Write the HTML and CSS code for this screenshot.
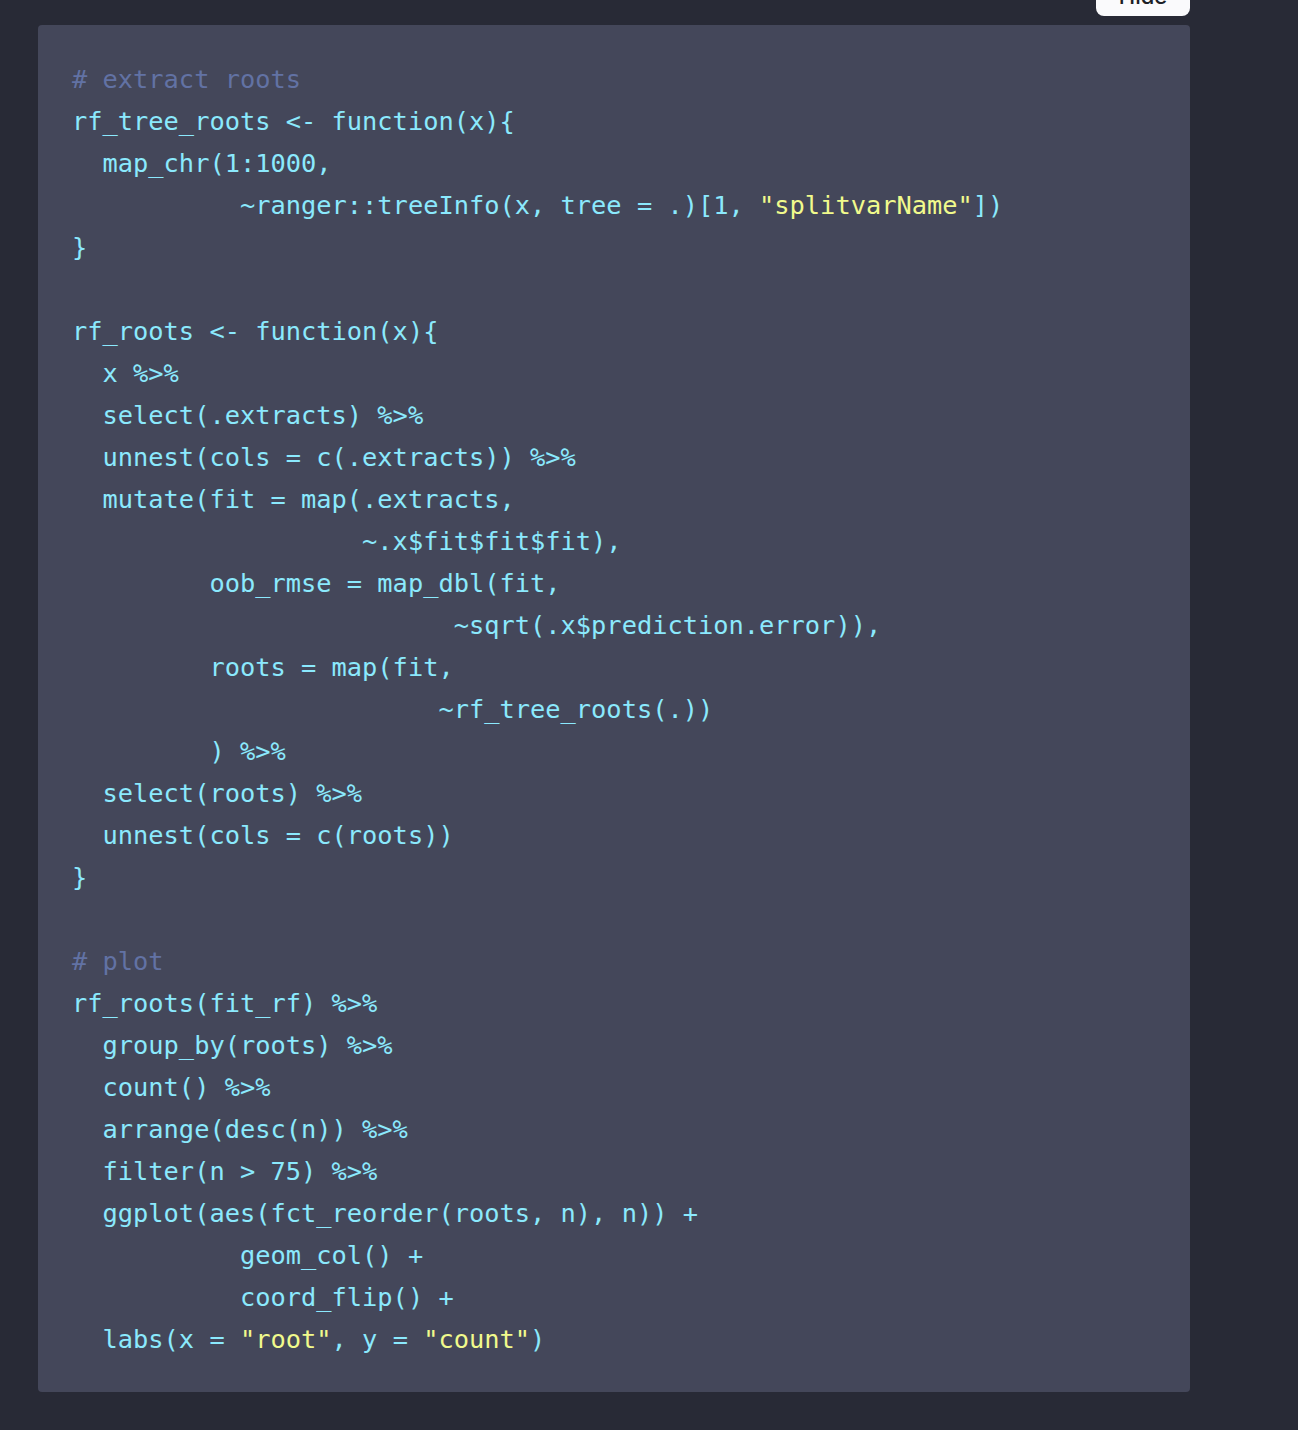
FILE: index.html
```html
<!DOCTYPE html>
<html lang="en">
<head>
<meta charset="utf-8">
<title>Code</title>
<link rel="stylesheet" href="styles.css">
</head>
<body>
<div class="page">
  <div class="code-wrap">
    <button class="toggle" type="button">Hide</button>
    <pre class="code"><code><span class="c"># extract roots</span>
rf_tree_roots &lt;- function(x){
  map_chr(1:1000,
           ~ranger::treeInfo(x, tree = .)[1, <span class="s">"splitvarName"</span>])
}

rf_roots &lt;- function(x){
  x %&gt;%
  select(.extracts) %&gt;%
  unnest(cols = c(.extracts)) %&gt;%
  mutate(fit = map(.extracts,
                   ~.x$fit$fit$fit),
         oob_rmse = map_dbl(fit,
                         ~sqrt(.x$prediction.error)),
         roots = map(fit,
                        ~rf_tree_roots(.))
         ) %&gt;%
  select(roots) %&gt;%
  unnest(cols = c(roots))
}

<span class="c"># plot</span>
rf_roots(fit_rf) %&gt;%
  group_by(roots) %&gt;%
  count() %&gt;%
  arrange(desc(n)) %&gt;%
  filter(n &gt; 75) %&gt;%
  ggplot(aes(fct_reorder(roots, n), n)) +
           geom_col() +
           coord_flip() +
  labs(x = <span class="s">"root"</span>, y = <span class="s">"count"</span>)</code></pre>
  </div>
</div>
</body>
</html>
```

FILE: styles.css
```css
html, body {
  margin: 0;
  padding: 0;
  background: #282a36;
}

.page {
  padding: 25px 0 0 38px;
  min-height: 1405px;
}

.code-wrap {
  position: relative;
  width: 1152px;
}

.toggle {
  position: absolute;
  right: 0;
  top: -49px;
  width: 94px;
  height: 40px;
  border: none;
  border-radius: 8px;
  background: #fafafc;
  color: #1d1f27;
  font-family: "Inter", "Liberation Sans", sans-serif;
  font-size: 22px;
  font-weight: 500;
  padding: 0;
  line-height: 40px;
}

.code {
  margin: 0;
  box-sizing: border-box;
  width: 1152px;
  padding: 33px 34px 32px 34px;
  background: #44475a;
  border-radius: 4px;
  font-family: "DejaVu Sans Mono", "Liberation Mono", monospace;
  font-size: 25.36px;
  line-height: 42px;
  color: #8be9fd;
  white-space: pre;
}

.code code {
  font-family: inherit;
  font-size: inherit;
}

.c {
  color: #6272a4;
}

.s {
  color: #f1fa8c;
}
```
